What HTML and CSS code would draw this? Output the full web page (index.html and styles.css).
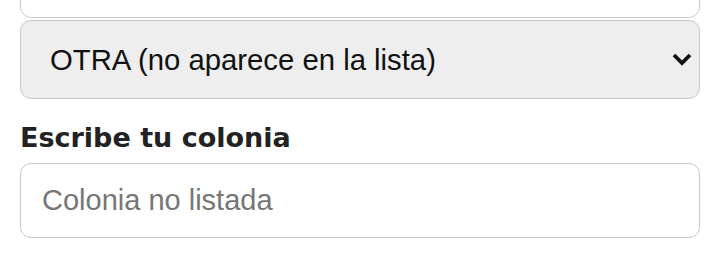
FILE: index.html
```html
<!DOCTYPE html>
<html lang="es">
<head>
  <meta charset="UTF-8" />
  <meta name="viewport" content="width=device-width, initial-scale=1.0"/>
  <title>Colonia</title>
  <link rel="stylesheet" href="styles.css">
</head>
<body>
  <form class="form">
    <input class="field prev" type="text" aria-label="Código postal">
    <select class="field select" aria-label="Colonia">
      <option>OTRA (no aparece en la lista)</option>
    </select>
    <label class="label" for="colonia">Escribe tu colonia</label>
    <input class="field input" id="colonia" type="text" placeholder="Colonia no listada">
  </form>
</body>
</html>
```

FILE: styles.css
```css
body {
  margin: 0;
  background: #fff;
  font-family: 'Liberation Sans', Arial, sans-serif;
  overflow: hidden;
}

.form {
  display: flex;
  flex-direction: column;
  padding: 0 20px;
  margin-top: -60px;
}

.field {
  box-sizing: border-box;
  width: 100%;
  font-family: 'Liberation Sans', Arial, sans-serif;
  font-size: 29px;
  color: #111;
  border: 1px solid #c9c9c9;
  border-radius: 11px;
  outline: none;
}

.prev {
  height: 78px;
  background: #fff;
}

.select {
  appearance: none;
  -webkit-appearance: none;
  margin-top: 2px;
  height: 79px;
  padding: 0 0 0 29px;
  font-size: 29.3px;
  background-color: #eeeeee;
  background-image: url("data:image/svg+xml,%3Csvg xmlns='http://www.w3.org/2000/svg' width='20' height='13' viewBox='0 0 20 13'%3E%3Cpath d='M2 2 L10 10 L18 2' fill='none' stroke='%23111' stroke-width='3.8'/%3E%3C/svg%3E");
  background-repeat: no-repeat;
  background-position: right 7px center;
}

.label {
  margin-top: 23px;
  font-family: 'DejaVu Sans', sans-serif;
  font-weight: bold;
  font-size: 27px;
  line-height: 31px;
  color: #222;
}

.input {
  margin-top: 10px;
  height: 75px;
  padding: 0 21px;
  background: #fff;
}

.input::placeholder {
  color: #767676;
}
```
